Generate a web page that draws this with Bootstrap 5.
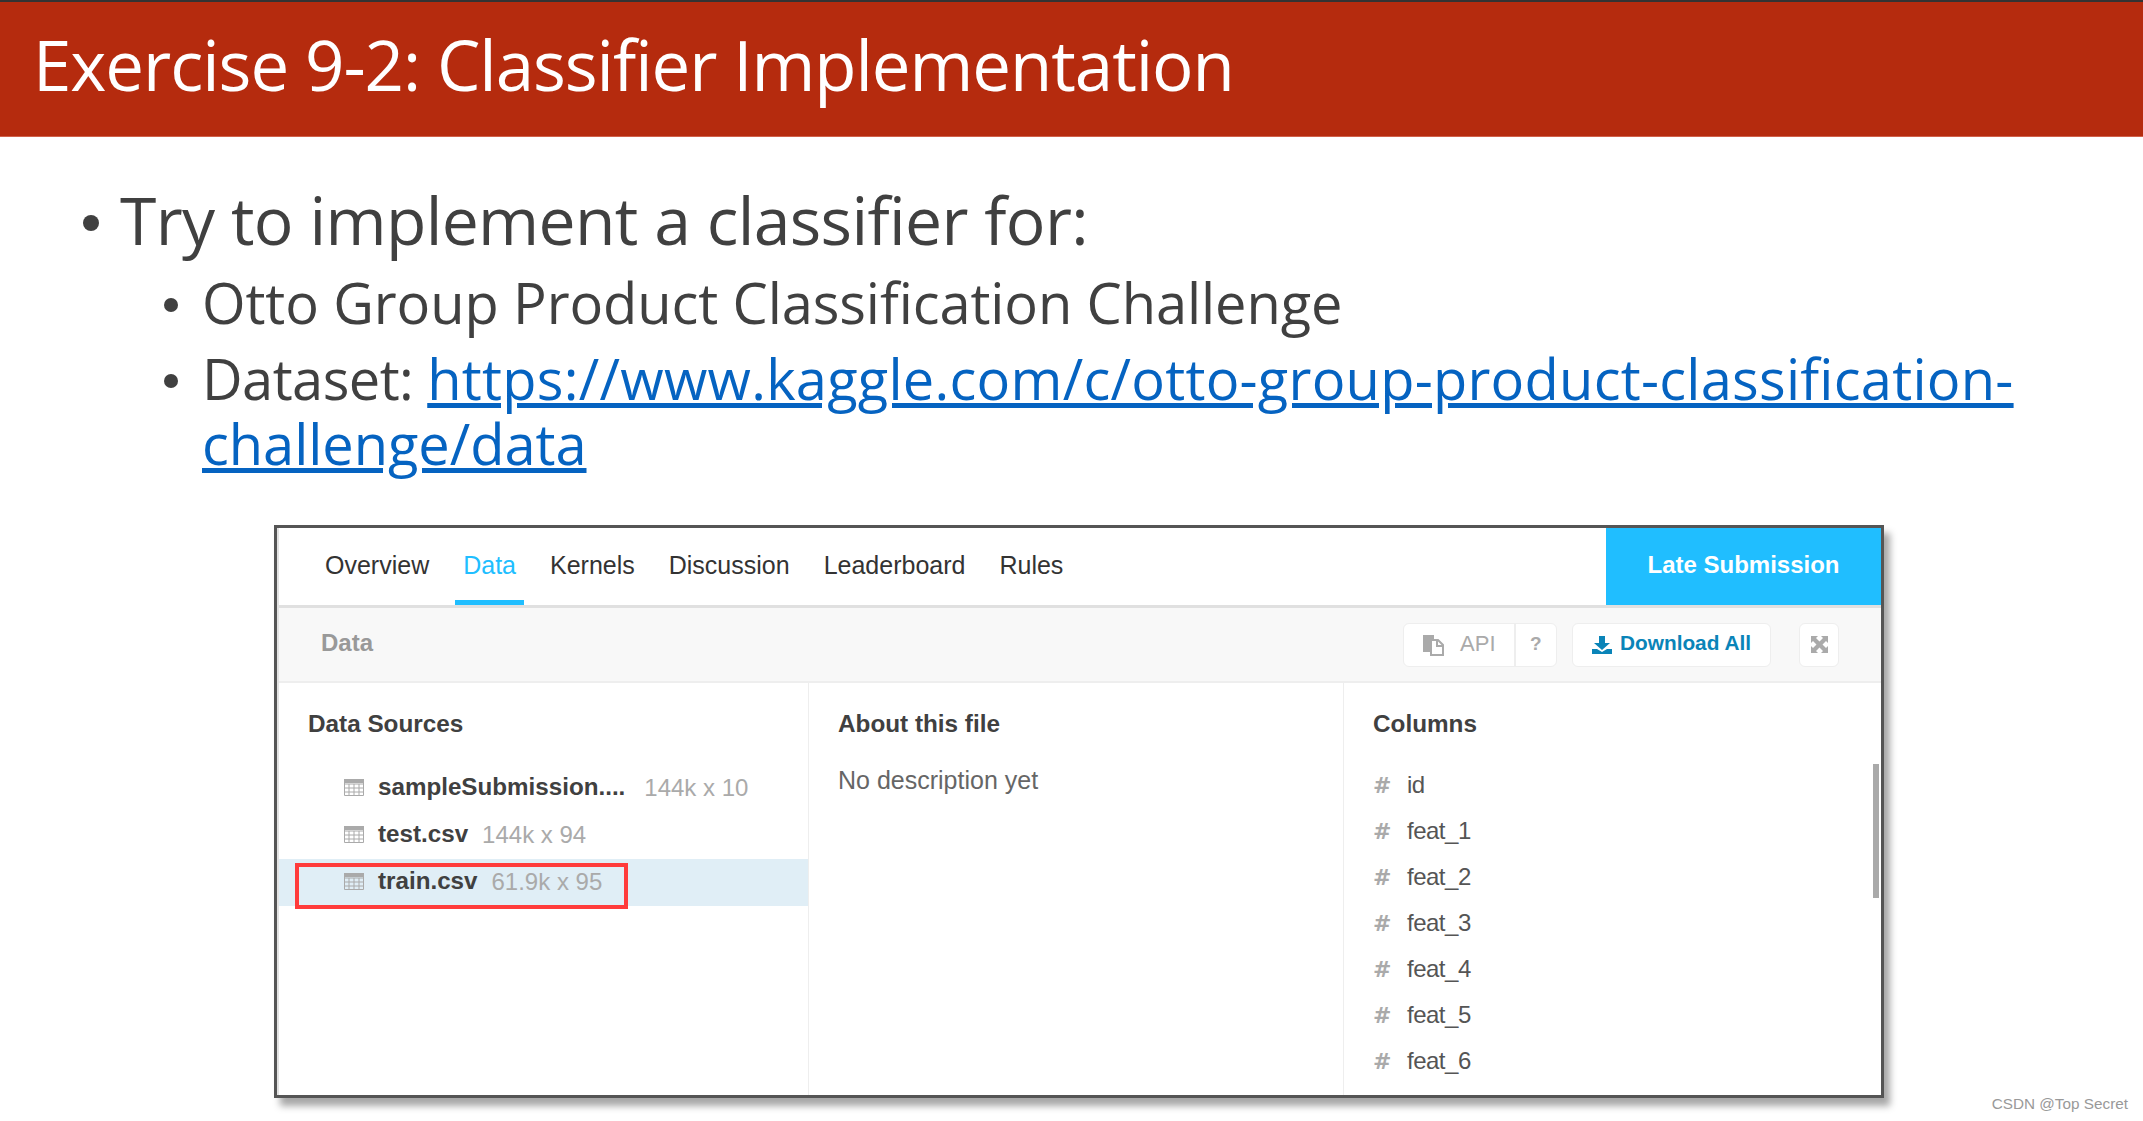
<!DOCTYPE html>
<html lang="en">
<head>
<meta charset="utf-8">
<title>Exercise 9-2</title>
<link href="https://cdn.jsdelivr.net/npm/bootstrap@5.3.0/dist/css/bootstrap.min.css" rel="stylesheet">
<style>
html,body{margin:0;height:1121px;overflow:hidden;background:#fff}
body{font-family:"Open Sans","Noto Sans",sans-serif;color:#404040}
.slide-head{height:137px;background:#b52b0e;border-top:2px solid #333;border-bottom:1px solid #d0614a;padding-left:33px;padding-bottom:10px;color:#fff;font-size:69px;line-height:1;letter-spacing:-1.05px}
.slide-body{padding-top:38px}
.lvl1{font-size:66px;line-height:88px;padding-left:83px;letter-spacing:-.64px}
.lvl2{font-size:56px;line-height:65px;padding-left:164px;letter-spacing:-.1px}
.lvl2.first{margin-top:7px}
.lvl2.second{margin-top:11px}
.dot-a,.dot-b{flex:none;border-radius:50%;background:#404040}
.dot-a{width:16px;height:16px;margin:40px 21px 0 0}
.dot-b{width:14px;height:14px;margin:28px 24px 0 0}
.ds-label{letter-spacing:-.55px}
.lvl2 a{color:#0563c1;letter-spacing:.25px}
.lvl2 a .wrap-tail{letter-spacing:-.05px}
.shot{margin:49px 0 0 274px;width:1610px;height:573px;border:3px solid #555;box-shadow:6px 8px 7px rgba(0,0,0,.35);background:#fff;font-family:"Liberation Sans","Roboto",sans-serif;position:relative}
.shot-inner{height:100%;border-left:2px solid #e2e2e2;display:flex;flex-direction:column}
.tabbar{height:80px;border-bottom:3px solid #e0e0e0;padding-left:38px;font-size:25px;color:#222}
.tab-item{padding:0 8px;height:77px;line-height:74px;margin-right:18px;color:#333;text-decoration:none}
.tab-on{color:#20beff;border-bottom:5px solid #20beff}
.late{width:275px;height:77px;background:#20beff;color:#fff;font-weight:700;font-size:24px;line-height:74px;text-align:center}
.subbar{height:75px;background:#f8f8f8;border-bottom:2px solid #eee;padding-left:42px;padding-right:42px;font-size:24px;font-weight:700;color:#999}
.subbar-name{margin-bottom:4px}
.chip{height:44px;background:#fff;border:1px solid #eee;border-radius:6px;font-size:22px;font-weight:700}
.chip-api{width:154px;color:#aaa}
.chip-api .part1{width:113px;border-right:2px solid #eee}
.chip-api .part1 span{margin-bottom:3px}
.chip-api .part2{width:41px;text-align:center;font-size:19px}
.chip-dl{width:199px;margin-left:15px;color:#0a84b8;font-size:20.800px}
.chip-dl span{margin-bottom:3px}
.chip-exp{width:40px;margin-left:28px}
.panes{flex:1;min-height:0}
.pane{padding-top:26px;padding-left:29px;position:relative;overflow:hidden}
.pane-a{width:530px;border-right:1px solid #eee}
.pane-b{width:535px;border-right:1px solid #eee}
.pane-c{flex:1}
.pane-title{font-size:24.300px;font-weight:700;color:#404040;line-height:30px;margin-bottom:26px}
.file-row{height:47px;display:flex;align-items:center;margin-left:-29px;padding-left:65px;padding-bottom:2px;font-size:24.200px;color:#404040;font-weight:700}
.file-row.sel{background:#e0eef6}
.file-row svg{margin-right:14px}
.file-dim{font-weight:400;font-size:24px;color:#aaa;margin-left:14px}
.file-dim.far{margin-left:19px}
.desc{font-size:25px;color:#666;margin-top:2px;line-height:30px}
.col-list{margin-top:-3px}
.col-row{height:46px;display:flex;align-items:center;font-size:24px;letter-spacing:-.5px;color:#555}
.hash{width:34px;color:#aaa;font-family:"DejaVu Sans",sans-serif;font-weight:700;font-size:22px;letter-spacing:0}
.redbox{position:absolute;left:18px;top:335px;width:333px;height:46px;border:4px solid #ff3b3b}
.sbar{position:absolute;right:2px;top:236px;width:6px;height:134px;background:#aaa}
.mark-wm{position:absolute;right:15px;top:1093px;font-family:"Liberation Sans",sans-serif;font-size:15.300px;color:#999}
</style>
</head>
<body>
<header class="slide-head d-flex align-items-center"><span class="slide-title">Exercise 9-2: Classifier Implementation</span></header>
<main class="slide-body">
  <div class="lvl1 d-flex"><span class="dot-a"></span><div>Try to implement a classifier for:</div></div>
  <div class="lvl2 first d-flex"><span class="dot-b"></span><div>Otto Group Product Classification Challenge</div></div>
  <div class="lvl2 second d-flex"><span class="dot-b"></span><div><span class="ds-label">Dataset: </span><a href="#">https://www.kaggle.com/c/otto-group-product-classification-<br><span class="wrap-tail">challenge/data</span></a></div></div>
  <section class="shot">
    <div class="shot-inner">
      <nav class="tabbar d-flex">
        <a class="tab-item" href="#">Overview</a>
        <a class="tab-item tab-on" href="#">Data</a>
        <a class="tab-item" href="#">Kernels</a>
        <a class="tab-item" href="#">Discussion</a>
        <a class="tab-item" href="#">Leaderboard</a>
        <a class="tab-item" href="#">Rules</a>
        <div class="late ms-auto">Late Submission</div>
      </nav>
      <div class="subbar d-flex align-items-center">
        <span class="subbar-name">Data</span>
        <div class="ms-auto d-flex align-items-center">
          <div class="chip chip-api d-flex align-items-center">
            <div class="part1 d-flex align-items-center justify-content-center gap-3 h-100">
              <svg width="22" height="22" viewBox="0 0 22 22"><path d="M1 1h11v4H8v13H1z" fill="#aaa"/><path d="M9 6h7l5 5v10H9z" fill="#fff" stroke="#aaa" stroke-width="2"/><path d="M15 6v6h6" fill="none" stroke="#aaa" stroke-width="2"/></svg>
              <span class="fw-normal">API</span>
            </div>
            <div class="part2">?</div>
          </div>
          <div class="chip chip-dl d-flex align-items-center justify-content-center gap-2">
            <svg width="20" height="20" viewBox="0 0 20 20"><path d="M7 1h6v7h5l-8 7-8-7h5z" fill="#0a84b8"/><path d="M0 14h5l5 3 5-3h5v5H0z" fill="#0a84b8"/></svg>
            <span>Download All</span>
          </div>
          <div class="chip chip-exp d-flex align-items-center justify-content-center">
            <svg width="19" height="19" viewBox="0 0 19 19"><path d="M1 1h7L6 3l3.500 3.500 3.500-3.500-2-2h7v7l-2-2-3.500 3.500L16 13l2-2v7h-7l2-2-3.500-3.500L6 16l2 2H1v-7l2 2 3.500-3.500L3 6 1 8z" fill="#aaa"/></svg>
          </div>
        </div>
      </div>
      <div class="panes d-flex">
        <div class="pane pane-a">
          <div class="pane-title">Data Sources</div>
          <div class="file-row"><svg width="20" height="17" viewBox="0 0 20 17"><path d="M.5.500h19v16H.5zM.5 5h19M.5 9h19M.5 13h19M5 5v12M10 5v12M15 5v12" fill="none" stroke="#aaa"/><rect width="20" height="4" fill="#aaa"/></svg>sampleSubmission....<span class="file-dim far">144k x 10</span></div>
          <div class="file-row"><svg width="20" height="17" viewBox="0 0 20 17"><path d="M.5.500h19v16H.5zM.5 5h19M.5 9h19M.5 13h19M5 5v12M10 5v12M15 5v12" fill="none" stroke="#aaa"/><rect width="20" height="4" fill="#aaa"/></svg>test.csv<span class="file-dim">144k x 94</span></div>
          <div class="file-row sel"><svg width="20" height="17" viewBox="0 0 20 17"><path d="M.5.500h19v16H.5zM.5 5h19M.5 9h19M.5 13h19M5 5v12M10 5v12M15 5v12" fill="none" stroke="#aaa"/><rect width="20" height="4" fill="#aaa"/></svg>train.csv<span class="file-dim">61.9k x 95</span></div>
        </div>
        <div class="pane pane-b">
          <div class="pane-title">About this file</div>
          <div class="desc">No description yet</div>
        </div>
        <div class="pane pane-c">
          <div class="pane-title">Columns</div>
          <div class="col-list">
            <div class="col-row"><span class="hash">#</span>id</div>
            <div class="col-row"><span class="hash">#</span>feat_1</div>
            <div class="col-row"><span class="hash">#</span>feat_2</div>
            <div class="col-row"><span class="hash">#</span>feat_3</div>
            <div class="col-row"><span class="hash">#</span>feat_4</div>
            <div class="col-row"><span class="hash">#</span>feat_5</div>
            <div class="col-row"><span class="hash">#</span>feat_6</div>
          </div>
        </div>
      </div>
    </div>
    <div class="redbox"></div>
    <div class="sbar"></div>
  </section>
</main>
<div class="mark-wm">CSDN @Top Secret</div>
<script src="https://cdn.jsdelivr.net/npm/bootstrap@5.3.0/dist/js/bootstrap.bundle.min.js"></script>
</body>
</html>
